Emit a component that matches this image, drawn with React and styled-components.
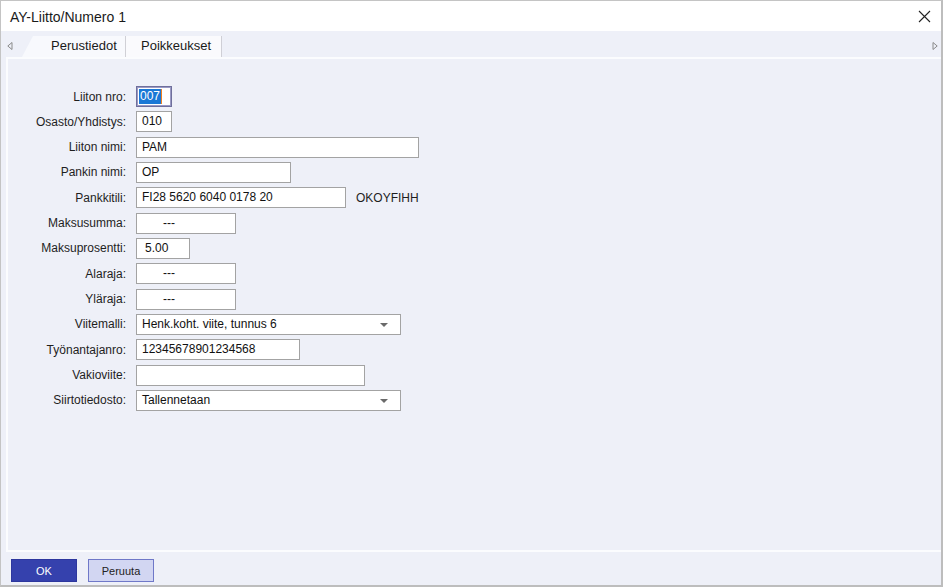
import styled, { createGlobalStyle } from "styled-components";

const GlobalStyle = createGlobalStyle`
  html, body {
    margin: 0;
    padding: 0;
    background: #ffffff;
  }
  body {
    font-family: "Liberation Sans", Arial, sans-serif;
    font-size: 12px;
    color: #1a1a1a;
  }
`;

const fields = [
  { label: "Liiton nro:", value: "007", width: 36, focused: true },
  { label: "Osasto/Yhdistys:", value: "010", width: 36 },
  { label: "Liiton nimi:", value: "PAM", width: 283 },
  { label: "Pankin nimi:", value: "OP", width: 155 },
  { label: "Pankkitili:", value: "FI28 5620 6040 0178 20", width: 210, extra: "OKOYFIHH" },
  { label: "Maksusumma:", value: "---", width: 100, indent: 26 },
  { label: "Maksuprosentti:", value: "5.00", width: 54, indent: 8 },
  { label: "Alaraja:", value: "---", width: 100, indent: 26 },
  { label: "Yläraja:", value: "---", width: 100, indent: 26 },
  { label: "Viitemalli:", value: "Henk.koht. viite, tunnus 6", width: 265, select: true },
  { label: "Työnantajanro:", value: "12345678901234568", width: 164 },
  { label: "Vakioviite:", value: "", width: 229 },
  { label: "Siirtotiedosto:", value: "Tallennetaan", width: 265, select: true },
];

export default function App() {
  return (
    <>
      <GlobalStyle />
      <Window>
        <TitleBar>
          <Title>AY-Liitto/Numero 1</Title>
          <CloseButton>
            <svg width="13" height="13" viewBox="0 0 13 13">
              <path d="M1 1 L12 12 M12 1 L1 12" stroke="#222" strokeWidth="1.1" fill="none" />
            </svg>
          </CloseButton>
        </TitleBar>

        <TabStrip>
          <ScrollArrow>
            <svg width="6" height="8" viewBox="0 0 6 8">
              <path d="M5 0.5 L0.8 4 L5 7.5 Z" fill="none" stroke="#8a8a8a" strokeWidth="1" />
            </svg>
          </ScrollArrow>
          <Tabs>
            <Tab $active>Perustiedot</Tab>
            <Tab>Poikkeukset</Tab>
          </Tabs>
          <ScrollArrow $right>
            <svg width="6" height="8" viewBox="0 0 6 8">
              <path d="M1 0.5 L5.2 4 L1 7.5 Z" fill="none" stroke="#8a8a8a" strokeWidth="1" />
            </svg>
          </ScrollArrow>
        </TabStrip>

        <Panel>
          <Form>
            {fields.map((f) => (
              <Row key={f.label}>
                <Label>{f.label}</Label>
                <FieldCell>
                  <Field $width={f.width} $indent={f.indent} $focused={f.focused}>
                    {f.focused ? (
                      <>
                        <Selected>{f.value}</Selected>
                        <Caret />
                      </>
                    ) : (
                      <FieldText>{f.value}</FieldText>
                    )}
                    {f.select && <DropArrow />}
                  </Field>
                  {f.extra && <Extra>{f.extra}</Extra>}
                </FieldCell>
              </Row>
            ))}
          </Form>
        </Panel>

        <Footer>
          <Button $primary>OK</Button>
          <Button>Peruuta</Button>
        </Footer>
      </Window>
    </>
  );
}

const Window = styled.div`
  width: 943px;
  height: 587px;
  box-sizing: border-box;
  border-top: 1px solid #c4c4c4;
  border-left: 1px solid #c4c4c4;
  border-right: 2px solid #bdbdbd;
  border-bottom: 2px solid #bdbdbd;
  background: #eef0f8;
  display: flex;
  flex-direction: column;
  overflow: hidden;
`;

const TitleBar = styled.div`
  height: 30px;
  background: #ffffff;
  display: flex;
  align-items: center;
  justify-content: space-between;
  padding: 0 7px 0 9px;
`;

const Title = styled.div`
  font-size: 14px;
  color: #1a1a1a;
  padding-top: 1px;
`;

const CloseButton = styled.div`
  width: 20px;
  height: 20px;
  display: flex;
  align-items: center;
  justify-content: center;
`;

const TabStrip = styled.div`
  height: 26px;
  display: flex;
  align-items: flex-end;
  background: #eef0f8;
`;

const ScrollArrow = styled.div`
  width: ${(p) => (p.$right ? "9px" : "21px")};
  height: 26px;
  display: flex;
  align-items: center;
  justify-content: ${(p) => (p.$right ? "flex-start" : "flex-start")};
  padding-left: ${(p) => (p.$right ? "0" : "6px")};
  box-sizing: border-box;
  margin-left: ${(p) => (p.$right ? "auto" : "0")};
  padding-top: 3px;
`;

const Tabs = styled.div`
  display: flex;
  align-items: flex-end;
  height: 21px;
`;

const Tab = styled.div`
  height: 21px;
  box-sizing: border-box;
  font-size: 13px;
  line-height: 20px;
  color: #1a1a1a;
  background: ${(p) => (p.$active ? "#f8f9fd" : "#fafafd")};
  ${(p) =>
    p.$active
      ? `
    width: 104px;
    padding-left: 29px;
    clip-path: polygon(0 100%, 11px 0, 100% 0, 100% 100%);
    border-right: 1px solid #d0d0d6;
  `
      : `
    width: 96px;
    padding-left: 15px;
    border-right: 1px solid #cfcfd6;
  `}
`;

const Panel = styled.div`
  flex: 1;
  margin-left: 5px;
  border-top: 2px solid #fbfcfe;
  border-left: 2px solid #fbfcfe;
  border-bottom: 2px solid #fbfcfe;
  background: #eef0f8;
  padding-top: 27px;
`;

const Form = styled.div`
  display: flex;
  flex-direction: column;
  gap: 4.33px;
`;

const Row = styled.div`
  display: grid;
  grid-template-columns: 118px 1fr;
  column-gap: 10px;
  height: 21px;
  align-items: center;
`;

const Label = styled.div`
  text-align: right;
  font-size: 12px;
  color: #1e1e1e;
  white-space: nowrap;
`;

const FieldCell = styled.div`
  display: flex;
  align-items: center;
  gap: 10px;
`;

const Field = styled.div`
  position: relative;
  width: ${(p) => p.$width}px;
  height: 21px;
  box-sizing: border-box;
  background: #ffffff;
  border: 1px solid ${(p) => (p.$focused ? "#6f6f9c" : "#a3a3a3")};
  box-shadow: inset 0 0 0 ${(p) => (p.$focused ? "1px #9a9ac4" : "0 transparent")};
  padding-left: ${(p) => p.$indent || 5}px;
  display: flex;
  align-items: center;
  font-size: 12px;
  color: #111;
  white-space: nowrap;
`;

const FieldText = styled.span`
  line-height: 19px;
`;

const Selected = styled.span`
  background: #1a78d6;
  color: #ffffff;
  line-height: 15px;
  margin-left: -3px;
  padding: 0 1px;
`;

const Caret = styled.span`
  width: 1px;
  height: 15px;
  background: #f08020;
`;

const DropArrow = styled.span`
  position: absolute;
  right: 12px;
  top: 8px;
  width: 0;
  height: 0;
  border-left: 4px solid transparent;
  border-right: 4px solid transparent;
  border-top: 4px solid #6a6a6a;
`;

const Extra = styled.span`
  font-size: 12px;
  color: #1e1e1e;
`;

const Footer = styled.div`
  height: 33px;
  box-sizing: border-box;
  padding: 7px 0 0 10px;
  display: flex;
  gap: 11px;
  align-items: flex-start;
`;

const Button = styled.div`
  width: 66px;
  height: 23px;
  box-sizing: border-box;
  display: flex;
  align-items: center;
  justify-content: center;
  font-size: 11px;
  background: ${(p) => (p.$primary ? "#3541ad" : "#d2d6f2")};
  border: 1px solid ${(p) => (p.$primary ? "#2d379e" : "#6f78c8")};
  color: ${(p) => (p.$primary ? "#ffffff" : "#222222")};
`;
